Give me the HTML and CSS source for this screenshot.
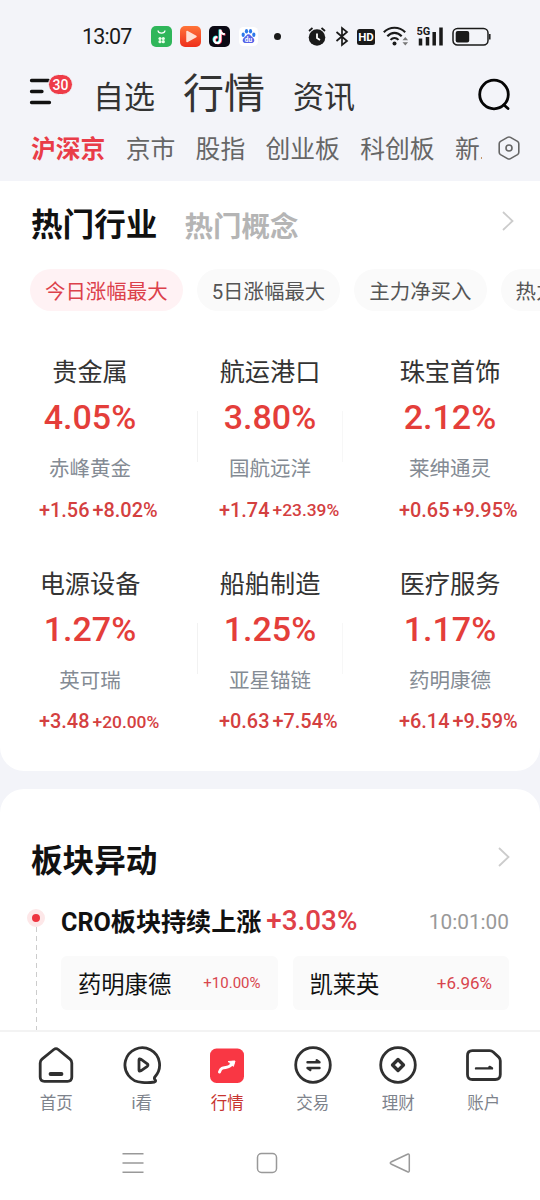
FILE: index.html
```html
<!DOCTYPE html>
<html lang="zh-CN">
<head>
  <meta charset="UTF-8" />
  <meta name="viewport" content="width=device-width, initial-scale=1.0" />
  <title>行情</title>
  <link rel="stylesheet" href="styles.css">
</head>
<body>
<div class="app">

  <header class="top">
    <div class="status">
      <span class="clock">13:07</span>
      <div class="notices">
        <svg width="21" height="21" viewBox="0 0 21 21"><rect width="21" height="21" rx="5" fill="#2fb65a"/><path d="M7 4.500c.5 3.600 6.500 3.600 7 0" fill="none" stroke="#fff" stroke-width="1.300"/><g fill="#e9ffe9"><circle cx="9" cy="12.500" r="1.600"/><circle cx="12.300" cy="12.500" r="1.600"/><circle cx="9" cy="15.700" r="1.600"/><circle cx="12.300" cy="15.700" r="1.600"/></g></svg>
        <svg width="21" height="21" viewBox="0 0 21 21"><defs><linearGradient id="play" x2="0" y2="1"><stop stop-color="#ff7439"/><stop offset="1" stop-color="#ee2f1c"/></linearGradient></defs><rect width="21" height="21" rx="5" fill="url(#play)"/><path d="M7 5.500 16 10.500 7 15.500z" fill="#ffe0d4" stroke="#ffe0d4" stroke-width="1.500" stroke-linejoin="round"/></svg>
        <svg width="21" height="21" viewBox="0 0 21 21"><rect width="21" height="21" rx="5" fill="#0b0914"/><g fill="none" stroke-width="2.200"><path d="M10.600 3.500v10a3 3 0 1 1-3-3M10.600 4c.3 2.700 2 4 4.500 4.200" stroke="#25f4ee"/><path d="M12 4v10.300a3 3 0 1 1-3-3M12 4.500c.3 2.700 2 4 4.500 4.200" stroke="#fe2c55"/><path d="M11.300 3.500V14a3 3 0 1 1-3-3M11.300 4c.3 2.700 2 4 4.500 4.200" stroke="#fff"/></g></svg>
        <svg width="21" height="21" viewBox="0 0 21 21"><rect x="1" y="1" width="19" height="19" rx="4.500" fill="#fff"/><g fill="#2b78ea"><ellipse cx="5.200" cy="8.800" rx="1.600" ry="2.200"/><ellipse cx="8.500" cy="5.200" rx="1.600" ry="2.300"/><ellipse cx="12.500" cy="5.200" rx="1.600" ry="2.300"/><ellipse cx="15.800" cy="8.800" rx="1.600" ry="2.200"/></g><path d="M10.500 8.300c2 0 2.500 2 4.300 3.300 3 2.700 1 5.700-1.500 5.500H7.700c-2.500.2-4.500-2.800-1.500-5.500C8 10.300 8.500 8.300 10.500 8.300z" fill="#5663e8"/><text x="10.500" y="15.800" class="du">du</text></svg>
      </div>
      <i class="more"></i>
      <div class="signals">
        <svg width="20" height="21" viewBox="0 0 20 21"><circle cx="10" cy="11.500" r="8.300" fill="#1a1a1a"/><path d="M2 5 5.500 2M18 5 14.500 2" stroke="#1a1a1a" stroke-width="1.800"/><path d="M10 7.500v4.500l3 2" stroke="#fff" stroke-width="1.800" fill="none"/></svg>
        <svg width="14" height="21" viewBox="0 0 14 21"><path d="M1.500 6 12 15l-5 4V2l5 4L1.500 15" fill="none" stroke="#1a1a1a" stroke-width="1.700"/></svg>
        <svg width="18" height="21" viewBox="0 0 18 21"><rect y="3" width="18" height="16" rx="2.500" fill="#1a1a1a"/><text x="9" y="15.300" class="hd">HD</text></svg>
        <svg width="26" height="21" viewBox="0 0 26 21"><g fill="none" stroke="#1a1a1a" stroke-width="2.100"><path d="M.8 6.300c6-6 15.400-6 21.400 0M4.300 10.300c4.200-4.600 10.200-4.600 14.400 0M7.500 13.900c2.400-2.600 5.600-2.600 8 0"/></g><circle cx="11.500" cy="17.600" r="2" fill="#1a1a1a"/><path d="m19.500 14.300 2.800-3.300 2.800 3.300zM19.500 16.200l2.800 3.300 2.800-3.300z" fill="#777"/></svg>
        <svg width="27" height="21" viewBox="0 0 27 21"><text x="-.5" y="8.800" class="net">5G</text><path d="M3.500 12.500V19.500M10.500 11V19.500M17.200 6v13.500M24 1.500v18" stroke="#1a1a1a" stroke-width="3.500"/></svg>
        <svg width="39" height="21" viewBox="0 0 39 21"><rect x="1" y="2.500" width="35" height="16.500" rx="4.500" fill="none" stroke="#1a1a1a" stroke-width="1.500"/><rect x="3.700" y="5" width="13.500" height="11.500" rx="2" fill="#1a1a1a"/><path d="M37.800 8v5.500" stroke="#1a1a1a" stroke-width="1.500"/></svg>
      </div>
    </div>

    <nav class="main-tabs">
      <div class="menu">
        <svg width="26" height="28" viewBox="0 0 26 28"><path d="M2.500 2.500h17M2.500 13.500h10.500M2.500 24.500h18" stroke="#111" stroke-width="3.300" stroke-linecap="round"/></svg>
        <span class="badge">30</span>
      </div>
      <a class="mtab">自选</a>
      <a class="mtab on">行情</a>
      <a class="mtab">资讯</a>
      <svg class="search" width="34" height="34" viewBox="0 0 34 34" fill="none" stroke="#050505" stroke-width="2.800" stroke-linecap="round"><circle cx="17" cy="16.500" r="14.300"/><path d="m27 27 4 3.500"/></svg>
    </nav>

    <nav class="sub-tabs">
      <div class="sub-list">
        <a class="on">沪深京</a><a>京市</a><a>股指</a><a>创业板</a><a>科创板</a><a>新三板</a>
      </div>
      <svg width="24" height="24" viewBox="0 0 24 24" fill="none" stroke="#666" stroke-width="1.600" stroke-linejoin="round"><path d="M10.500 1.400q1.500-.9 3 0l7 4q1.300.8 1.300 2.300v8.600q0 1.500-1.300 2.300l-7 4q-1.500.9-3 0l-7-4q-1.300-.8-1.300-2.300V7.700q0-1.500 1.300-2.300z"/><circle cx="12" cy="12" r="3"/></svg>
    </nav>
  </header>

  <section class="card hot">
    <div class="hot-head">
      <h2>热门行业</h2><h3>热门概念</h3>
      <svg class="arrow" width="14" height="20" viewBox="0 0 14 20"><path d="m2 1 9.500 9L2 19"/></svg>
    </div>
    <div class="chips">
      <a class="chip on">今日涨幅最大</a>
      <a class="chip">5日涨幅最大</a>
      <a class="chip">主力净买入</a>
      <a class="chip">热力图</a>
    </div>

    <div class="grid">
      <div class="cell">
        <p class="name">贵金属</p><p class="pct">4.05%</p><p class="stock">赤峰黄金</p>
        <p class="chg"><span>+1.56</span><span>+8.02%</span></p>
      </div>
      <div class="cell mid">
        <p class="name">航运港口</p><p class="pct">3.80%</p><p class="stock">国航远洋</p>
        <p class="chg"><span>+1.74</span><span class="sm">+23.39%</span></p>
      </div>
      <div class="cell">
        <p class="name">珠宝首饰</p><p class="pct">2.12%</p><p class="stock">莱绅通灵</p>
        <p class="chg"><span>+0.65</span><span>+9.95%</span></p>
      </div>
      <div class="cell">
        <p class="name">电源设备</p><p class="pct">1.27%</p><p class="stock">英可瑞</p>
        <p class="chg"><span>+3.48</span><span class="sm">+20.00%</span></p>
      </div>
      <div class="cell mid">
        <p class="name">船舶制造</p><p class="pct">1.25%</p><p class="stock">亚星锚链</p>
        <p class="chg"><span>+0.63</span><span>+7.54%</span></p>
      </div>
      <div class="cell">
        <p class="name">医疗服务</p><p class="pct">1.17%</p><p class="stock">药明康德</p>
        <p class="chg"><span>+6.14</span><span>+9.59%</span></p>
      </div>
    </div>
  </section>

  <section class="card moves">
    <div class="moves-head">
      <h2>板块异动</h2>
      <svg class="arrow" width="14" height="20" viewBox="0 0 14 20"><path d="m2 1 9.500 9L2 19"/></svg>
    </div>
    <div class="event">
      <div class="rail"><i class="dot"></i><i class="line"></i></div>
      <div class="event-body">
        <div class="event-title"><b>CRO板块持续上涨</b><span class="up">+3.03%</span><time>10:01:00</time></div>
        <div class="stocks">
          <div class="tag">药明康德<span class="t10">+10.00%</span></div>
          <div class="tag">凯莱英<span>+6.96%</span></div>
        </div>
      </div>
    </div>
  </section>

  <nav class="tabbar">
    <a>
      <svg viewBox="0 0 40 40"><path d="M17.800 4.500q2.200-1.700 4.400 0L34 14.200q1.800 1.500 1.800 3.800v14q0 4.300-4.300 4.300h-23Q4.200 36.300 4.200 32V18q0-2.300 1.800-3.800z"/><path d="M14.500 29h11" stroke-width="3.800"/></svg>
      首页
    </a>
    <a>
      <svg viewBox="0 0 40 40"><path d="M33.200 31.500A17.300 17.300 0 1 0 20 37.300q6 .7 12.500-.3 2-.8.500-2.300-1.300-1.500.2-3.200"/><path d="M17 15v10q.2 1.800 1.800.9l6.500-4.600q1.300-1.200 0-2.500l-6.500-4.700Q17.200 13.200 17 15z"/></svg>
      i看
    </a>
    <a class="on">
      <svg viewBox="0 0 40 40"><rect x="3" y="3.500" width="34" height="34.500" rx="6.500" fill="#f93744" stroke="none"/><path d="M12.500 27c1.500-4.500 4-4.300 7-4.700 3.200-.5 4-1.500 6.500-5" stroke="#fff" stroke-width="3"/><path d="m21.500 16.500 6.500-.5-1.500 5z" fill="#fff" stroke="#fff" stroke-width="1"/></svg>
      行情
    </a>
    <a>
      <svg viewBox="0 0 40 40"><circle cx="20" cy="20" r="17.300"/><path d="M14.500 17.200h12l-2.800-2M26.500 23h-12l2.800 2" stroke-width="2.400"/></svg>
      交易
    </a>
    <a>
      <svg viewBox="0 0 40 40"><circle cx="20" cy="20" r="17.300"/><path d="m20 14.500 5.500 5.500-5.500 5.500-5.500-5.500z" stroke-width="3.300"/></svg>
      理财
    </a>
    <a>
      <svg viewBox="0 0 40 40"><path d="M8.500 5.700h17q2.200 0 3.700 1.400l5.500 5q1.600 1.500 1.600 3.700V29.500q0 5-5 5H8.500q-5 0-5-5V10.700q0-5 5-5z"/><path d="M12 23.400h16l-2.500-1.500" stroke-width="2.400"/></svg>
      账户
    </a>
  </nav>

  <div class="sysnav">
    <svg width="22" height="22" viewBox="0 0 22 22"><path d="M.5 1.700h21M.5 11h21M.5 20.300h21"/></svg>
    <svg width="22" height="22" viewBox="0 0 22 22"><rect x="1.500" y="1.500" width="19" height="19" rx="4"/></svg>
    <svg width="22" height="22" viewBox="0 0 22 22"><path d="M18.500 2.200q1.700-.7 1.800 1v15.600q-.1 1.700-1.800 1L2 12q-1.500-1 0-2z"/></svg>
  </div>
</div>
</body>
</html>
```
FILE: styles.css
```css
*{margin:0;padding:0;box-sizing:border-box;}
html,body{width:100%;height:100%;overflow:hidden;}
body{font-family:Roboto,'Noto Sans CJK SC',sans-serif;background:#f3f4f9;color:#333;}
svg{display:block;flex:none;}
a{color:inherit;text-decoration:none;}

.app{display:flex;flex-direction:column;width:540px;height:1200px;overflow:hidden;}

/* header */
.top{flex:none;height:181px;}
.status{display:flex;align-items:center;height:72px;padding-left:82px;}
.clock{width:69px;font-size:21.500px;letter-spacing:-.8px;color:#1a1a1a;}
.notices{display:flex;gap:8px;}
.more{width:7px;height:7px;margin-left:15px;border-radius:50%;background:#1a1a1a;}
.signals{display:flex;margin-left:26px;gap:8px;}
.du{font:bold 6.5px Roboto,sans-serif;fill:#fff;text-anchor:middle;}
.hd{font:bold 11.5px Roboto,sans-serif;fill:#fff;text-anchor:middle;}
.net{font:bold 11px Roboto,sans-serif;fill:#1a1a1a;}

.main-tabs{display:flex;align-items:center;height:48px;padding:0 29px 0 29px;}
.menu{position:relative;width:64px;margin-top:-9px;}
.badge{position:absolute;left:19px;top:-4px;width:25px;height:21px;border:1px solid #f3f4f9;border-radius:11px;background:#ee3c48;color:#fff;font-size:14px;font-weight:500;line-height:20px;text-align:center;}
.mtab{font-size:31px;line-height:46px;margin:3px 28px 0 0;}
.mtab.on{font-size:41px;margin-top:-5px;}
.search{margin-left:auto;margin-top:-2px;}

.sub-tabs{display:flex;align-items:center;height:58px;padding:0 20px 0 31px;color:#666;}
.sub-list{display:flex;gap:20.300px;width:451px;margin-top:2px;overflow:hidden;white-space:nowrap;font-size:24.800px;line-height:40px;}
.sub-list .on{font-weight:bold;color:#e93c48;}
.sub-tabs svg{margin:-2px -1px 0 auto;}

/* cards */
.card{background:#fff;}
.arrow{margin-left:auto;}
.arrow path{fill:none;stroke:#ccc;stroke-width:1.800;}
h2{font-size:31.600px;line-height:44px;font-weight:bold;color:#111;}
h3{font-size:28.500px;line-height:44px;font-weight:bold;color:#b5b5b5;}

.hot{flex:none;height:590px;border-radius:0 0 24px 24px;}
.hot-head{display:flex;align-items:center;height:88px;padding:2px 25px 0 31px;}
.hot-head h3{margin:3px 0 0 27px;}
.hot-head .arrow{margin-top:-11px;}
.chips{display:flex;gap:14px;padding-left:30px;overflow:hidden;}
.chip{flex:none;height:42px;padding:0 15px;border-radius:21px;background:#fafafa;color:#555;font-size:20.450px;line-height:46px;}
.chip.on{background:#fff2f4;color:#dc414b;}

.grid{display:grid;grid-template-columns:repeat(3,180px);grid-auto-rows:211.500px;padding-top:39px;}
.cell{text-align:center;}
.name{font-size:25.200px;line-height:45px;}
.pct{margin-top:-2px;font-size:34px;line-height:48px;font-weight:500;color:#e43e3a;}
.stock{margin-top:6px;font-size:20.500px;line-height:44px;color:#848b94;}
.chg{display:flex;align-items:center;gap:3px;height:38px;padding-left:39px;font-size:19.900px;font-weight:500;color:#d4403f;white-space:nowrap;}
.chg .sm{font-size:17.400px;}
.mid{background:linear-gradient(#f2f2f2,#f2f2f2) 17px 61px/1px 51px no-repeat,linear-gradient(#f7f7f7,#f7f7f7) 162px 61px/1px 51px no-repeat;}

/* sector moves */
.moves{flex:none;height:241px;margin-top:18px;border-radius:24px 24px 0 0;overflow:hidden;}
.moves-head{display:flex;align-items:center;height:97px;padding:49px 29px 0 31px;}
.moves-head .arrow{margin-top:-11px;}
.event{display:flex;height:144px;padding-left:27px;}
.rail{display:flex;flex-direction:column;align-items:center;width:18px;padding-top:23px;}
.dot{flex:none;width:18px;height:18px;border:5px solid #fde7e8;border-radius:50%;background:#ee343f;}
.line{flex:1;width:1px;background:repeating-linear-gradient(#ccc 0 5px,transparent 5px 9px);}
.event-body{flex:1;padding:9px 31px 0 16px;}
.event-title{display:flex;align-items:center;height:50px;color:#111;font-size:25.100px;}
.event-title b{margin-top:-1px;}
.up{margin:0 0 0 5px;font-size:27.800px;font-weight:500;color:#df4149;}
.event-title time{margin:3px 0 0 auto;font-size:20.800px;color:#999;}
.stocks{display:grid;grid-template-columns:1fr 1fr;gap:15px;margin-top:11px;}
.tag{display:flex;align-items:center;justify-content:space-between;height:54px;padding:0 17px;border-radius:6px;background:#fafafa;color:#111;font-size:23.300px;}
.tag span{font-size:17px;color:#d8454d;}
.tag .t10{font-size:15px;}

/* bottom bars */
.tabbar{flex:none;display:grid;grid-template-columns:repeat(6,85.500px);justify-content:center;height:94px;padding-top:13px;border-top:2px solid #f3f3f3;background:#fff;}
.tabbar a{display:flex;flex-direction:column;align-items:center;font-size:16.500px;line-height:38px;color:#7e838c;}
.tabbar svg{width:40px;height:40px;fill:none;stroke:#303030;stroke-width:2.800;stroke-linecap:round;stroke-linejoin:round;}
.tabbar .on{color:#c7342f;}
.sysnav{flex:1;display:flex;gap:111.500px;padding:28px 0 0 122px;background:#fff;}
.sysnav svg{fill:none;stroke:#999;stroke-width:1.500;}
```
